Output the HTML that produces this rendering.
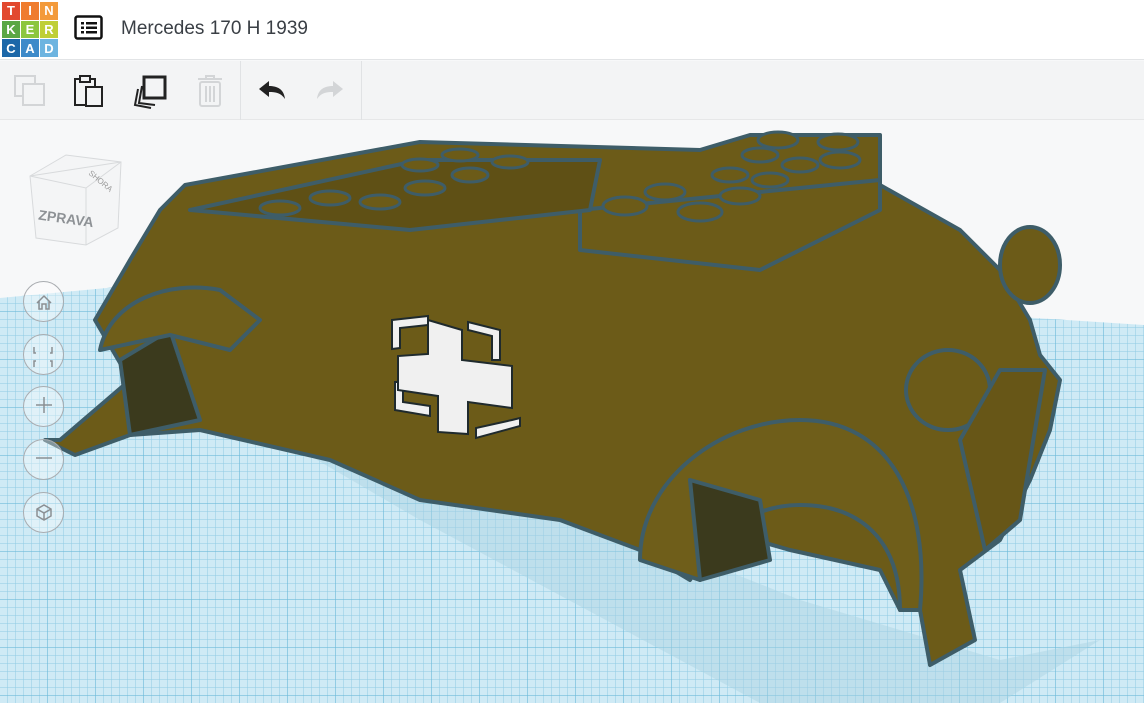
<!DOCTYPE html>
<html><head><meta charset="utf-8"><style>
*{margin:0;padding:0;box-sizing:border-box}
body{width:1144px;height:703px;overflow:hidden;font-family:"Liberation Sans",sans-serif;background:#f7f8f9;position:relative}
#hdr{position:absolute;left:0;top:0;width:1144px;height:60px;background:#fff;border-bottom:1px solid #e2e4e6}
#logo{position:absolute;left:2px;top:2px;width:55px;height:55px;display:grid;grid-template-columns:repeat(3,18px);grid-gap:1px}
#logo div{color:#fff;font-weight:bold;font-size:13px;display:flex;align-items:center;justify-content:center}
#title{position:absolute;left:121px;top:18px;font-size:19px;color:#3a3f45}
#tb{position:absolute;left:0;top:61px;width:1144px;height:59px;background:#f3f4f5;border-bottom:1px solid #e6e7e8}
.sep{position:absolute;top:0;width:1px;height:59px;background:#e0e2e4}
.nav{position:absolute;left:23px;width:41px;height:41px;border:1px solid #a9acb0;border-radius:50%;background:rgba(255,255,255,.35)}
</style></head><body>
<svg style="position:absolute;left:0;top:120px" width="1144" height="583">
<defs>
<pattern id="g" width="8" height="8" patternUnits="userSpaceOnUse"><path d="M8 0V8H0" fill="none" stroke="#8fcbe3" stroke-width="1"/></pattern>
<pattern id="G" width="48" height="48" patternUnits="userSpaceOnUse"><path d="M48 0V48H0" fill="none" stroke="#5fb3d5" stroke-width="1.3"/></pattern>
</defs>
<polygon points="0,178 300,150 600,170 1144,205 1144,583 0,583" fill="#cfeaf5"/>
<polygon points="0,178 300,150 600,170 1144,205 1144,583 0,583" fill="url(#g)"/>
<polygon points="0,178 300,150 600,170 1144,205 1144,583 0,583" fill="url(#G)" opacity=".7"/>
<polygon points="300,330 650,420 800,480 1000,540 1100,520 1000,583 760,583 420,400" fill="#a9d3e2" opacity=".45"/>
<g stroke="#3e5d68" stroke-width="4" stroke-linejoin="round">
<polygon points="60,320 130,260 95,200 130,140 160,90 185,65 420,22 700,30 750,15 880,15 880,65 960,110 1000,150 1030,200 1040,235 1060,260 1050,310 1030,360 1000,420 960,450 975,520 930,545 920,490 900,490 880,450 790,430 720,410 690,460 640,430 560,400 420,380 330,340 200,310 130,315 75,335 45,320" fill="#6c5b18"/>
<path d="M130,315 L120,240 L170,210 L200,300 Z" fill="#3b3a1d"/>
<path d="M640,440 C640,360 720,300 800,300 C890,300 930,380 920,490 L900,490 C900,420 860,385 800,385 C740,385 700,430 700,460 Z" fill="#6f5e1a"/>
<path d="M700,460 L690,360 L760,380 L770,440 Z" fill="#3b3a1d"/>
<path d="M100,230 C110,180 170,160 220,170 L260,200 L230,230 L170,215 Z" fill="#6f5e1a"/>
<ellipse cx="1030" cy="145" rx="30" ry="38" fill="#6c5b18"/>
<ellipse cx="948" cy="270" rx="42" ry="40" fill="#6c5b18"/>
<path d="M580,90 L880,60 L880,90 L760,150 L580,130 Z" fill="#6c5b18"/>
<path d="M190,90 L420,40 L600,40 L590,90 L410,110 Z" fill="#5f5015"/>
<path d="M960,320 L1000,250 L1045,250 L1020,400 L985,430 Z" fill="#675617"/>
</g>
<g fill="#6c5b18" stroke="#3e5d68" stroke-width="3">
<ellipse cx="625" cy="86" rx="22" ry="9"/><ellipse cx="700" cy="92" rx="22" ry="9"/><ellipse cx="665" cy="72" rx="20" ry="8"/><ellipse cx="740" cy="76" rx="20" ry="8"/>
<ellipse cx="730" cy="55" rx="18" ry="7"/><ellipse cx="770" cy="60" rx="18" ry="7"/><ellipse cx="800" cy="45" rx="18" ry="7"/><ellipse cx="840" cy="40" rx="20" ry="8"/>
<ellipse cx="778" cy="20" rx="20" ry="8"/><ellipse cx="838" cy="22" rx="20" ry="8"/><ellipse cx="760" cy="35" rx="18" ry="7"/>
<ellipse cx="280" cy="88" rx="20" ry="7"/><ellipse cx="330" cy="78" rx="20" ry="7"/><ellipse cx="380" cy="82" rx="20" ry="7"/><ellipse cx="425" cy="68" rx="20" ry="7"/>
<ellipse cx="470" cy="55" rx="18" ry="7"/><ellipse cx="510" cy="42" rx="18" ry="6"/><ellipse cx="420" cy="45" rx="18" ry="6"/><ellipse cx="460" cy="35" rx="18" ry="6"/>
</g>
<!-- Balkenkreuz -->
<g stroke="#1f2a2d" stroke-width="2" fill="#f0f0f0">
<polygon points="392,200 428,196 428,205 400,208 400,228 392,229"/>
<polygon points="468,202 500,210 500,240 492,240 492,216 468,210"/>
<polygon points="395,262 403,262 403,282 430,286 430,296 395,290"/>
<polygon points="520,298 520,306 476,318 476,308 512,300"/>
<polygon points="428,200 462,210 462,240 512,246 512,288 468,282 468,314 438,312 438,276 398,270 398,236 428,234"/>
</g>
</svg>
<div id="hdr">
<div id="logo">
<div style="background:#e2492f">T</div><div style="background:#ef7c2e">I</div><div style="background:#f39a3a">N</div>
<div style="background:#5aa745">K</div><div style="background:#8cc63f">E</div><div style="background:#bfcf37">R</div>
<div style="background:#1c67a8">C</div><div style="background:#3d8ac9">A</div><div style="background:#6db4e0">D</div>
</div>
<svg style="position:absolute;left:74px;top:15px" width="30" height="26"><rect x="1.5" y="1.5" width="26" height="22" rx="2" fill="none" stroke="#111" stroke-width="2.5"/><g fill="#111"><rect x="7" y="7" width="3" height="2.5"/><rect x="12" y="7" width="11" height="2.5"/><rect x="7" y="11.5" width="3" height="2.5"/><rect x="12" y="11.5" width="11" height="2.5"/><rect x="7" y="16" width="3" height="2.5"/><rect x="12" y="16" width="11" height="2.5"/></g></svg>
<div id="title">Mercedes 170 H 1939</div>
</div>
<div id="tb">
<svg style="position:absolute;left:14px;top:14px" width="32" height="32"><rect x="1" y="1" width="20" height="20" fill="none" stroke="#d3d5d7" stroke-width="2"/><rect x="9" y="9" width="21" height="21" fill="#f3f4f5" stroke="#d3d5d7" stroke-width="2"/></svg>
<svg style="position:absolute;left:73px;top:14px" width="32" height="34"><rect x="2" y="4" width="20" height="26" fill="none" stroke="#222" stroke-width="2"/><rect x="7" y="1" width="10" height="6" fill="#f3f4f5" stroke="#222" stroke-width="2"/><rect x="13" y="12" width="16" height="19" fill="#f3f4f5" stroke="#222" stroke-width="2"/></svg>
<svg style="position:absolute;left:133px;top:14px" width="36" height="36"><path d="M5,14 L2,30 L18,33" fill="none" stroke="#222" stroke-width="2"/><path d="M9,11 L6,28 L22,30" fill="none" stroke="#222" stroke-width="2"/><rect x="11" y="2" width="21" height="21" fill="#f3f4f5" stroke="#222" stroke-width="3"/></svg>
<svg style="position:absolute;left:196px;top:13px" width="28" height="34"><path d="M2,5H26M10,5V2H18V5" fill="none" stroke="#d3d5d7" stroke-width="2"/><rect x="4" y="8" width="20" height="24" rx="2" fill="none" stroke="#d3d5d7" stroke-width="2"/><path d="M10,12V28M14,12V28M18,12V28" stroke="#d3d5d7" stroke-width="2"/></svg>
<div class="sep" style="left:240px"></div>
<svg style="position:absolute;left:257px;top:19px" width="30" height="22"><path d="M2,9 L12,1 V6 C20,6 27,9 28,19 C24,13 19,12 12,12 V17 Z" fill="#222"/></svg>
<svg style="position:absolute;left:315px;top:19px" width="30" height="22"><path d="M28,9 L18,1 V6 C10,6 3,9 2,19 C6,13 11,12 18,12 V17 Z" fill="#d3d5d7"/></svg>
<div class="sep" style="left:361px"></div>
</div>
<svg style="position:absolute;left:26px;top:150px" width="100" height="110">
<polygon points="4,26 40,5 95,12 92,78 60,95 10,88" fill="#f4f5f6" stroke="#d8dadc"/>
<polygon points="4,26 60,38 95,12" fill="none" stroke="#d8dadc"/>
<line x1="60" y1="38" x2="60" y2="95" stroke="#d8dadc"/>
<text x="12" y="72" font-size="14" font-weight="bold" fill="#8d9195" transform="rotate(8 30 70)">ZPRAVA</text>
<text x="62" y="24" font-size="8" fill="#999" transform="rotate(40 62 24)">SHORA</text>
</svg>
<div class="nav" style="top:281px"></div>
<div class="nav" style="top:334px"></div>
<div class="nav" style="top:386px"></div>
<div class="nav" style="top:439px"></div>
<div class="nav" style="top:492px"></div>
<svg style="position:absolute;left:23px;top:281px" width="42" height="260" fill="none" stroke="#8b8f93" stroke-width="1.5">
<path d="M14,22 L21,15 L28,22 M16,20V28H19V23H23V28H26V20"/>
<path d="M13,72H11V66M29,66V72H27M13,80H11V86M29,86V80H27"/>
<path d="M21,116V132M13,124H29"/>
<path d="M13,177H29"/>
<path d="M14,228L21,224L28,228V235L21,239L14,235Z M14,228L21,232L28,228M21,232V239"/>
</svg>
</body></html>
